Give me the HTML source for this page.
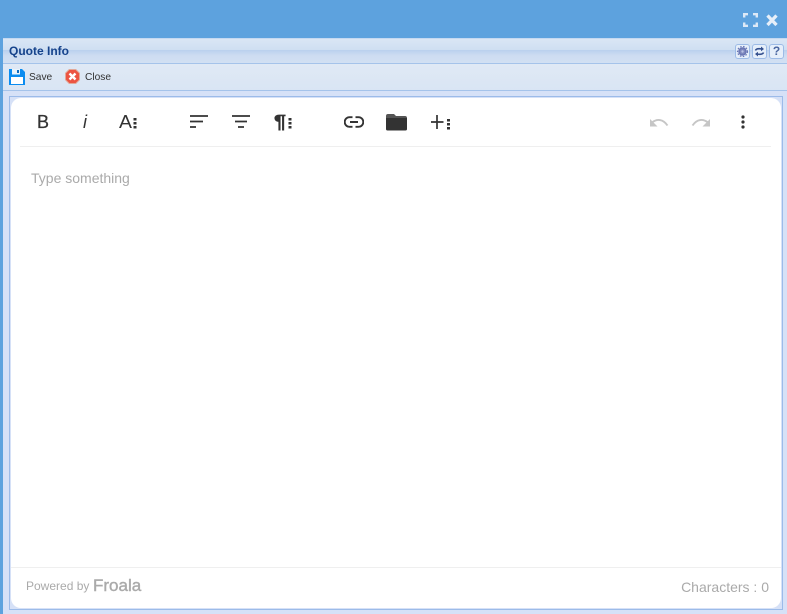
<!DOCTYPE html>
<html><head><meta charset="utf-8">
<style>
html,body{margin:0;padding:0}
body{width:787px;height:614px;overflow:hidden;position:relative;background:#5da2de;font-family:"Liberation Sans",sans-serif}
div,span,svg{position:absolute;display:block}
.t{white-space:nowrap}
.btn{width:13px;height:13px;top:44px;border:1px solid #9dbbe6;border-radius:3px;background:#e6effa}
</style></head>
<body>
<div style="left:3px;top:38px;width:784px;height:576px;background:#d6e1f7"></div>
<div style="left:3px;top:38px;width:784px;height:1px;background:#c5d9f1"></div>
<div style="left:3px;top:39px;width:784px;height:11px;background:linear-gradient(#dae6f5,#cfdff2)"></div>
<div style="left:3px;top:50px;width:784px;height:13px;background:linear-gradient(#b9d0ee,#cddcf1 40%,#d2e0f3)"></div>
<div style="left:3px;top:63px;width:784px;height:1px;background:#a5c3ea"></div>
<div style="left:3px;top:64px;width:784px;height:26px;background:linear-gradient(#e0e9f5,#d9e5f4)"></div>
<div style="left:3px;top:90px;width:784px;height:1px;background:#a5c3ea"></div>
<div class="t" style="left:9px;top:44px;font-size:12px;line-height:14px;font-weight:bold;color:#15428b">Quote Info</div>

<svg style="left:9px;top:69px" width="16" height="16" viewBox="0 0 16 16"><path d="M0 0H13L16 3V16H0Z" fill="#0a8cf0"/><path d="M3 0H11V5.500H3Z" fill="#e8f3fc"/><path d="M8 1H10V4H8Z" fill="#0a6cc0"/><path d="M2 8H14V15H2Z" fill="#fff"/></svg>
<div class="t" style="left:29px;top:71px;font-size:10.200px;line-height:14px;color:#333">Save</div>
<svg style="left:65px;top:69px" width="15" height="15" viewBox="0 0 15 15"><path d="M4.200 .5H10.800L14.500 4.200V10.800L10.800 14.500H4.200L.5 10.800V4.200Z" fill="#ec5442" stroke="#e2a898"/><path d="M4.500 4.500L10.500 10.500M10.500 4.500L4.500 10.500" stroke="#fff" stroke-width="2.400"/></svg>
<div class="t" style="left:85px;top:71px;font-size:10.200px;line-height:14px;color:#333">Close</div>

<svg style="left:743px;top:13px" width="15" height="14" viewBox="0 0 15 14"><path d="M1.200 4.500V1.200H5M10 1.200H13.800V4.500M13.800 9.500V12.800H10M5 12.800H1.200V9.500" fill="none" stroke="#dce9f7" stroke-width="2.400"/></svg>
<svg style="left:766px;top:13px" width="13" height="14" viewBox="0 0 13 14"><path d="M1.500 2.500L10.500 12M10.500 2.500L1.500 12" stroke="#e6eff9" stroke-width="3.300"/></svg>

<div class="btn" style="left:735px"></div>
<div class="btn" style="left:752px"></div>
<div class="btn" style="left:769px"></div>
<svg style="left:735px;top:44px" width="15" height="15" viewBox="0 0 15 15"><circle cx="7.500" cy="7.500" r="3.500" fill="#7f88bd" stroke="#6a77b5" stroke-width="1.500"/><circle cx="7.500" cy="7.500" r="5" fill="none" stroke="#6a77b5" stroke-width="1.200" stroke-dasharray="1.500 1.500"/><circle cx="7.500" cy="7.500" r="1.200" fill="#b9c2e4"/></svg>
<svg style="left:752px;top:44px" width="15" height="15" viewBox="0 0 15 15"><path d="M3.500 6.500C4 4.800 7 4.500 10 5M11.500 8.500C11 10.200 8 10.500 5 10" fill="none" stroke="#34508f" stroke-width="1.600"/><path d="M9 2.500L12 5L9 7.200ZM6 7.800L3 10L6 12.500Z" fill="#34508f"/></svg>
<div class="t" style="left:769px;top:44px;width:15px;text-align:center;font-size:12px;line-height:15px;font-weight:bold;color:#4a66a0">?</div>

<div style="left:9px;top:96px;width:772px;height:512px;border:1px solid #9cbbe9;background:#d6e1f7"></div>
<div style="left:11px;top:98px;width:770px;height:510px;background:#fff;border-radius:10px"></div>
<div style="left:20px;top:146px;width:751px;height:1px;background:#efefef"></div>
<div style="left:11px;top:567px;width:770px;height:1px;background:#efefef"></div>

<div class="t" style="left:37px;top:111px;font-size:18px;line-height:22px;color:#333;-webkit-text-stroke:.25px #333">B</div>
<div class="t" style="left:83px;top:111px;font-size:18px;line-height:22px;color:#333;font-style:italic">i</div>
<div class="t" style="left:119px;top:111px;font-size:18px;line-height:22px;color:#333;transform:scaleX(1.08);transform-origin:left">A</div>
<svg style="left:133px;top:117px" width="4" height="13" viewBox="0 0 4 13"><path d="M.5 1H3.500V3.500H.5ZM.5 5H3.500V7.500H.5ZM.5 9H3.500V11.500H.5Z" fill="#333"/></svg>

<svg style="left:189px;top:115px" width="20" height="14" viewBox="0 0 20 14"><path d="M1 1H19M1 6.500H14M1 12H7" stroke="#333" stroke-width="1.800"/></svg>
<svg style="left:231px;top:115px" width="20" height="14" viewBox="0 0 20 14"><path d="M1 1H19M4 6.500H16M7 12H13" stroke="#333" stroke-width="1.800"/></svg>
<div class="t" style="left:274px;top:111px;font-size:18px;line-height:22px;color:#333;-webkit-text-stroke:.7px #333;transform:scaleX(1.25);transform-origin:left">¶</div>
<svg style="left:288px;top:117px" width="4" height="13" viewBox="0 0 4 13"><path d="M.5 1H3.500V3.500H.5ZM.5 5H3.500V7.500H.5ZM.5 9H3.500V11.500H.5Z" fill="#333"/></svg>

<svg style="left:344px;top:115px" width="20" height="14" viewBox="0 0 20 14"><path d="M8.500 2.200H5.500A4.800 4.800 0 0 0 5.500 11.800H8.500M11.500 2.200H14.500A4.800 4.800 0 0 1 14.500 11.800H11.500M6 7H14" fill="none" stroke="#333" stroke-width="1.900"/></svg>
<svg style="left:386px;top:114px" width="21" height="17" viewBox="0 0 21 17"><path d="M0 2Q0 0 2 0H8L10 2H19Q21 2 21 4H0Z" fill="#555"/><path d="M0 4H21V15Q21 16.500 19.500 16.500H1.500Q0 16.500 0 15Z" fill="#333"/></svg>
<svg style="left:430px;top:114px" width="22" height="16" viewBox="0 0 22 16"><path d="M7 1V15M1 8H13.500" stroke="#333" stroke-width="1.700"/><path d="M17 5H20V7.500H17ZM17 9H20V11.500H17ZM17 13H20V15.500H17Z" fill="#333"/></svg>

<svg style="left:649px;top:116px" width="20" height="12" viewBox="0 0 20 12"><path d="M3 6.500C8 2.500 14 3 18.500 9.500" fill="none" stroke="#c6c6c6" stroke-width="1.900"/><path d="M1 3V10.500H8.500Z" fill="#c6c6c6"/></svg>
<svg style="left:691px;top:116px" width="20" height="12" viewBox="0 0 20 12"><path d="M17 6.500C12 2.500 6 3 1.500 9.500" fill="none" stroke="#c6c6c6" stroke-width="1.900"/><path d="M19 3V10.500H11.500Z" fill="#c6c6c6"/></svg>
<svg style="left:740px;top:114px" width="6" height="16" viewBox="0 0 6 16"><circle cx="3" cy="3" r="1.600" fill="#333"/><circle cx="3" cy="8" r="1.600" fill="#333"/><circle cx="3" cy="13" r="1.600" fill="#333"/></svg>

<div class="t" style="left:31px;top:170px;font-size:14px;line-height:16px;color:#aaa">Type something</div>
<div class="t" style="left:26px;top:579px;font-size:12px;line-height:15px;color:#aaa">Powered by</div>
<div class="t" style="left:93px;top:576px;font-size:17px;line-height:19px;color:#aaa;-webkit-text-stroke:.4px #aaa">Froala</div>
<div class="t" style="right:18px;top:579px;font-size:14px;line-height:16px;color:#aaa">Characters : 0</div>
</body></html>
